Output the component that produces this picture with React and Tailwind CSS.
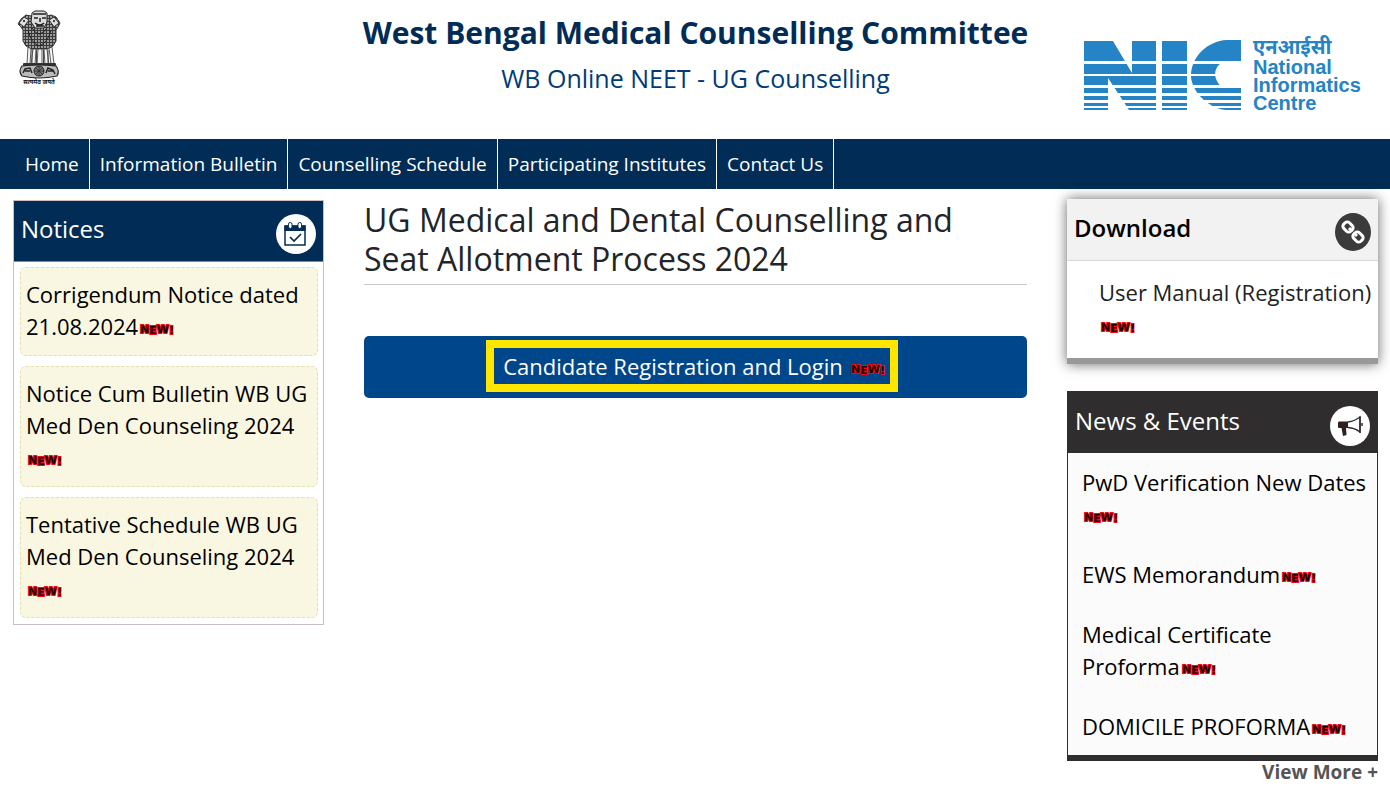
import React from "react";

const navLinks = [
  "Home",
  "Information Bulletin",
  "Counselling Schedule",
  "Participating Institutes",
  "Contact Us",
];

const notices = [
  "Corrigendum Notice dated 21.08.2024",
  "Notice Cum Bulletin WB UG Med Den Counseling 2024",
  "Tentative Schedule WB UG Med Den Counseling 2024",
];

const news = [
  "PwD Verification New Dates",
  "EWS Memorandum",
  "Medical Certificate Proforma",
  "DOMICILE PROFORMA",
];

function NewBadge() {
  return (
    <svg width="36" height="14" className="inline-block ml-px align-[-1px]">
      <text
        x="1"
        y="11"
        dy="0 1 -1 1"
        fontFamily="DejaVu Sans"
        fontWeight="bold"
        fontSize="11"
        fill="#200"
        stroke="#f00a14"
        strokeWidth="2"
        paintOrder="stroke"
      >
        NEW!
      </text>
    </svg>
  );
}

function Emblem() {
  return (
    <svg viewBox="0 0 44 76" className="w-[44px] h-[76px]" aria-label="State emblem">
      <defs>
        <pattern id="mane" width="3" height="3" patternUnits="userSpaceOnUse">
          <rect width="3" height="3" fill="#3a3a3a" />
          <circle cx="1" cy="1" r="0.9" fill="#ccc" />
        </pattern>
      </defs>
      {/* side lions */}
      <path
        d="M14 6 L9 5 L4 9 L1 14 L4 17 L6 20 L6 31 L9 36 L14 39 L30 39 L36 36 L39 31 L39 20 L41 17 L43 13 L39 7 L34 5 L30 6 Z"
        fill="url(#mane)"
        stroke="#333"
        strokeWidth="1"
      />
      <path d="M2 13 L7 7 L12 10 L9 14 L7 17 Z M42 13 L37 7 L32 10 L35 14 L37 17 Z" fill="#ddd" stroke="#333" strokeWidth="1" />
      <circle cx="7" cy="11" r="1" fill="#111" />
      <circle cx="37" cy="11" r="1" fill="#111" />
      {/* front lion */}
      <path d="M15 3 L18 1 L27 1 L30 3 L30 12 L27 18 L18 18 L14 12 Z" fill="#ddd" stroke="#222" strokeWidth="1" />
      <path d="M16 4 h13 M17 8 h4 M25 8 h4 M23 8 v4 M18 13 q5 4 9 0 M19 16 h8" fill="none" stroke="#222" strokeWidth="1.5" />
      <path d="M11 20 Q14 33 22 36 Q31 33 34 20 M15 18 Q22 30 30 18" fill="none" stroke="#222" strokeWidth="1" />
      {/* legs */}
      <path
        d="M11 37 L14 39 L13 54 L10 54 Z M16 39 L19 39 L18 55 L14 55 Z M21 39 L25 39 L25 55 L20 55 Z M27 39 L30 39 L32 55 L28 55 Z M32 38 L35 37 L37 54 L34 54 Z"
        fill="#f4f4f4"
        stroke="#333"
        strokeWidth="0.8"
      />
      <path d="M15 40 V54 M19.5 40 V54 M26.5 40 V54 M31 40 V54" stroke="#444" strokeWidth="1" />
      {/* abacus with wheel */}
      <rect x="6" y="53" width="33" height="3" rx="1" fill="#333" />
      <path d="M5 56 Q1 61 5 66 Q22 70 40 66 Q43 61 39 56 Q22 54 5 56 Z" fill="#bbb" stroke="#222" strokeWidth="1.2" />
      <circle cx="22" cy="61" r="5" fill="#777" stroke="#222" strokeWidth="1" />
      <path d="M22 56 v10 M17 61 h10 M18 57 l8 8 M26 57 l-8 8" stroke="#222" strokeWidth="0.7" />
      <path d="M6 63 L8 59 L13 58 L15 63 M8 61 L13 61 M29 63 L31 58 L36 60 L38 64 M31 61 L36 61" fill="none" stroke="#222" strokeWidth="1.5" />
      <text x="22" y="74" textAnchor="middle" fontSize="6" fontWeight="bold" fontFamily="Noto Sans, Noto Sans Devanagari, sans-serif" fill="#111">
        सत्यमेव जयते
      </text>
    </svg>
  );
}

function NicLogo() {
  return (
    <svg viewBox="0 0 280 80" className="w-[280px] h-20 overflow-visible" aria-label="National Informatics Centre">
      <defs>
        <clipPath id="stripes">
          <rect x="0" y="4" width="160" height="22" />
          <rect x="0" y="29" width="160" height="10" />
          <rect x="0" y="41" width="160" height="9" />
          <rect x="0" y="53" width="160" height="5" />
          <rect x="0" y="61" width="160" height="4" />
          <rect x="0" y="68" width="160" height="3" />
          <rect x="0" y="73" width="160" height="2" />
        </clipPath>
      </defs>
      <g clipPath="url(#stripes)" fill="#2484c6">
        <path d="M0 6 H29 L48 38 V6 H72 V75 H45 L24 43 V75 H0 Z" />
        <path d="M78 6 H103 V75 H78 Z" />
        <path d="M157 5 H143 C123 6 107 22 107 41 C107 54 122 73 142 75 H157 V53 H139 C129 45 129 34 137 28 L139 26 H157 Z" />
      </g>
      <g fill="#2484c6" fontFamily="Liberation Sans, Arial, sans-serif" fontWeight="bold" fontSize="20">
        <text x="169" y="19" fontSize="20" fontFamily="Noto Sans, Noto Sans Devanagari, sans-serif">
          एनआईसी
        </text>
        <text x="169" y="39">National</text>
        <text x="169" y="57">Informatics</text>
        <text x="169" y="75">Centre</text>
      </g>
    </svg>
  );
}

function CalendarIcon() {
  return (
    <svg viewBox="0 0 40 40" className="w-10 h-10">
      <circle cx="20" cy="20" r="20" fill="#fff" />
      <path d="M9 12 H29 V31 H9 Z" fill="#fff" stroke="#012c55" strokeWidth="1.5" />
      <path d="M8.5 11.5 H29.5 V17 H8.5 Z" fill="#012c55" />
      <rect x="12.5" y="8.5" width="3.5" height="6" rx="1.7" fill="#fff" stroke="#012c55" />
      <rect x="22" y="8.5" width="3.5" height="6" rx="1.7" fill="#fff" stroke="#012c55" />
      <path d="M14 23 L18 27 L25 20" fill="none" stroke="#012c55" strokeWidth="1.7" />
    </svg>
  );
}

function ChainIcon() {
  return (
    <svg viewBox="0 0 36 38" className="w-9 h-[38px]">
      <ellipse cx="18" cy="19" rx="18" ry="19" fill="#3b3b3b" />
      <g fill="none" stroke="#fff" strokeWidth="3">
        <rect x="-5" y="-4" width="10" height="8" rx="3" transform="translate(13 14) rotate(45)" />
        <rect x="-5" y="-4" width="10" height="8" rx="3" transform="translate(23 24) rotate(45)" />
        <path d="M14 15 L16 17 M20 21 L22 23" />
      </g>
    </svg>
  );
}

function HornIcon() {
  return (
    <svg viewBox="0 0 40 40" className="w-10 h-10">
      <circle cx="20" cy="20" r="20" fill="#fff" />
      <path d="M9 15.5 H18 V22 H16 L16.5 29 L13 30 L11.5 22 H9 Q8 22 8 21 V16.5 Z" fill="#2f2020" />
      <path d="M18 16 Q25 15 30 11 V26 Q25 22 18 21.5" fill="#fff" stroke="#2f2d2e" strokeWidth="1.3" />
      <path d="M30 10.5 V27 M32 17 V20" stroke="#2f2d2e" strokeWidth="1.5" />
    </svg>
  );
}

export default function App() {
  return (
    <div className="bg-white text-black font-['Open_Sans',sans-serif]">
      <header className="flex justify-between h-[139px] pl-[17px] pr-4">
        <div className="w-[290px] pt-2.5">
          <Emblem />
        </div>
        <div className="text-center text-[#012c55]">
          <h1 className="text-[30px] leading-[36px] font-bold pt-[15px]">
            West Bengal Medical Counselling Committee
          </h1>
          <h2 className="text-[25px] leading-[30px] font-medium pt-3 text-[#003b77]">
            WB Online NEET - UG Counselling
          </h2>
        </div>
        <div className="w-[290px] pt-[35px]">
          <NicLogo />
        </div>
      </header>

      <nav className="flex h-[50px] bg-[#012c55] pl-[15px]">
        {navLinks.map((label) => (
          <a
            key={label}
            href="#"
            className="flex items-center px-2.5 text-[19px] text-white border-r border-white"
          >
            {label}
          </a>
        ))}
      </nav>

      <main className="grid grid-cols-[311fr_663fr_311fr] gap-10 items-start pl-[13px] pr-3 pt-[11px]">
        <section className="border border-[#ccbfc0]">
          <div className="flex justify-between h-[61px] bg-[#012c55] border-b border-[#8a8790] pl-[7px] pr-[7px]">
            <h3 className="text-2xl leading-[56px] text-white">Notices</h3>
            <div className="pt-[13px]">
              <CalendarIcon />
            </div>
          </div>
          <ul className="flex flex-col gap-[10px] pl-[6px] pr-[5px] pt-[5px] pb-[6px]">
            {notices.map((text) => (
              <li
                key={text}
                className="border border-dashed border-[#e4e0ae] rounded-md bg-[#f9f7e2] px-[5px] pt-[10px] pb-[13px]"
              >
                <a href="#" className="block text-[22px] leading-[32px]">
                  {text}
                  <NewBadge />
                </a>
              </li>
            ))}
          </ul>
        </section>

        <section>
          <h2 className="text-[32px] leading-[39px] text-[#212529] pr-5 pb-[6px] border-b border-[#c8c8c8]">
            UG Medical and Dental Counselling and Seat Allotment Process 2024
          </h2>
          <button
            type="button"
            className="mt-[51px] flex w-full h-[62px] items-center justify-center rounded-[5px] bg-[#00468b] text-[22px] text-white"
          >
            <span className="flex items-center justify-end w-[412px] h-[52px] mr-2 mb-0.5 pr-1 border-8 border-[#ffe600]">
              <span>
                Candidate Registration and Login <NewBadge />
              </span>
            </span>
          </button>
        </section>

        <aside className="-mt-px">
          <section className="border-b-[6px] border-[#999] bg-white shadow-[0_0_12px_rgba(0,0,0,0.6)]">
            <div className="flex justify-between h-[62px] bg-[#f2f2f2] border-b border-[#d8d8d8] px-[7px]">
              <h3 className="text-2xl leading-[58px] font-semibold">Download</h3>
              <div className="pt-3.5">
                <ChainIcon />
              </div>
            </div>
            <a
              href="#"
              className="block pl-8 pr-1 pt-[15px] pb-[18px] text-[22px] leading-[32px] text-[#222]"
            >
              User Manual (Registration)
              <NewBadge />
            </a>
          </section>

          <section className="mt-[27px] border border-b-[6px] border-[#2f2d2e] bg-[#fbfbfb]">
            <div className="flex justify-between h-[61px] bg-[#2f2d2e] px-[7px]">
              <h3 className="text-2xl leading-[58px] text-white">News &amp; Events</h3>
              <div className="pt-3.5">
                <HornIcon />
              </div>
            </div>
            <ul className="flex flex-col gap-7 pl-3.5 pr-2 pt-[13px] pb-[13px]">
              {news.map((text) => (
                <li key={text}>
                  <a href="#" className="block text-[22px] leading-[32px]">
                    {text}
                    <NewBadge />
                  </a>
                </li>
              ))}
            </ul>
          </section>
          <a href="#" className="block text-right text-[19px] leading-[22px] font-bold text-[#555]">
            View More +
          </a>
        </aside>
      </main>
    </div>
  );
}
